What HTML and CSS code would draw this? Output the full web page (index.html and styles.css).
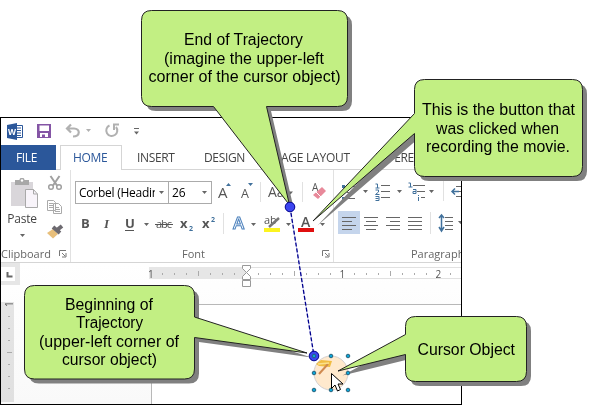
FILE: index.html
```html
<!DOCTYPE html>
<html lang="en">
<head>
<meta charset="utf-8">
<title>Cursor trajectory</title>
<link rel="stylesheet" href="styles.css">
</head>
<body>
<main class="figure">
  <section class="window">
    <header class="quickbar">
      <svg class="quick-icons" viewBox="0 0 150 27" width="150" height="27">
        <path d="M15 7.500h6.500v12H15z" fill="#fff" stroke="#2b579a"/>
        <path d="M16 10h4M16 12.500h4M16 15h4M16 17.500h4" stroke="#2b579a"/>
        <path d="M6 7l10-2v17l-10-2z" fill="#2b579a"/>
        <text x="7" y="16.500" class="word-mark" textLength="8" lengthAdjust="spacingAndGlyphs">W</text>
        <path d="M36 6h14v14H36z" fill="#8455a5"/>
        <path d="M38.500 7.500h9.500v5.500h-9.500zM39 15h8v4h-8z" fill="#fff"/>
        <path d="M41 16.500h3v2.500h-3z" fill="#8455a5"/>
        <path d="M70 6.500l-4 4 4 4M66.500 10.500h6.500c6.500 0 6.500 8-1 8" fill="none" stroke="#b1b1b1" stroke-width="2.200"/>
        <path d="M85 11h5l-2.500 3z" fill="#b1b1b1"/>
        <path d="M108.500 7.500a5.500 5.500 0 1 0 6.500 1.500M118 6.500h-5v5.500" fill="none" stroke="#b1b1b1" stroke-width="2"/>
        <path d="M133 10.500h5" stroke="#666"/><path d="M133 13.500h5l-2.500 3z" fill="#666"/>
      </svg>
    </header>
    <nav class="tabs">
      <span class="tab file">FILE</span>
      <span class="tab home">HOME</span>
      <span class="tab insert">INSERT</span>
      <span class="tab design">DESIGN</span>
      <span class="tab layout">PAGE LAYOUT</span>
      <span class="tab refs">REFERENCES</span>
    </nav>
    <div class="ribbon">
      <section class="group clipboard">
        <div class="clip-body">
          <div class="paste">
            <svg viewBox="0 0 30 32" width="30" height="32">
              <path d="M1 4h22v24H1z" fill="#d9d6da"/>
              <path d="M5 2h4.500c0-3 5-3 5 0H19v5H5z" fill="#a8a8a8"/><circle cx="12" cy="2.500" r="1.200" fill="#fff"/>
              <path d="M15.500 11.500h8l4 4.500v13.500h-12z" fill="#f8f4fa" stroke="#a9a9a9"/>
              <path d="M23.500 11.500v4.500h4" fill="none" stroke="#a9a9a9"/>
            </svg>
            <span class="paste-label">Paste</span>
            <svg class="caret" viewBox="0 0 5 3" width="5" height="3"><path d="M0 0h5L2.500 3z"/></svg>
          </div>
          <svg class="clip-icons" viewBox="0 0 20 68" width="20" height="68">
            <g fill="none" stroke="#a0a0a0"><path d="M4.500 2l6.500 9.500M13.500 2L7 11.500" stroke-width="2"/><circle cx="5" cy="13" r="2.300" stroke-width="1.500"/><circle cx="13" cy="13" r="2.300" stroke-width="1.500"/></g>
            <g fill="#fff" stroke="#aaa"><path d="M1.500 26.500h6l2 2v8h-8zM7.500 29.500h5l3 3v7h-8z"/><path d="M3 29.500h4M3 31.500h4M3 33.500h4M9 33.500h4M9 35.500h5M9 37.500h5"/></g>
            <path d="M7 55l5 5-5 4.500L1 59z" fill="#e8bf7b"/><path d="M7 53l7 6M11 56l5-4" stroke="#6d6a70" stroke-width="4"/>
          </svg>
        </div>
        <footer class="group-name"><span>Clipboard</span><svg class="launcher" viewBox="0 0 8 8" width="8" height="8"><path d="M.5 6V.5H7M3 3l3 3M7 3v4H3"/></svg></footer>
      </section>
      <section class="group font">
        <div class="pickers">
          <div class="picker family"><span>Corbel (Headin</span><svg class="caret" viewBox="0 0 5 3" width="5" height="3"><path d="M0 0h5L2.500 3z"/></svg></div>
          <div class="picker size"><span>26</span><svg class="caret" viewBox="0 0 5 3" width="5" height="3"><path d="M0 0h5L2.500 3z"/></svg></div>
          <svg viewBox="212 0 121 24" width="121" height="24">
            <g class="glyph"><text x="218" y="17.500" font-size="15">A</text><text x="241" y="17.500" font-size="12.500">A</text><text x="268" y="17" font-size="14">Aa</text><text x="312" y="11" font-size="10">A</text></g>
            <path d="M226 6l2.500-3L231 6zM248 3h5l-2.500 3z" fill="#41719c"/>
            <path d="M288 11.500h5l-2.500 3z" fill="#666"/><path d="M260.500 2v20M302.500 2v20" stroke="#e1e1e1"/>
            <path d="M313 15l9-8 4 4-8 8z" fill="#e8899a"/><path d="M316 12l5 5" stroke="#fff"/>
          </svg>
        </div>
        <svg class="font-tools" viewBox="71 0 262 26" width="262" height="26">
          <g class="glyph strong"><text x="81" y="17">B</text><text x="104" y="17" class="italic">I</text><text x="125" y="17">U</text></g>
          <path d="M125 19.500h9" stroke="#555"/>
          <g class="glyph"><text x="156" y="17" font-size="11" textLength="16">abc</text></g><path d="M155 13.500h18" stroke="#555"/>
          <g class="glyph strong"><text x="180" y="17">x</text><text x="202" y="17">x</text></g>
          <g class="tiny-blue"><text x="189" y="20">2</text><text x="211" y="11">2</text></g>
          <path d="M223.500 2v21" stroke="#e1e1e1"/>
          <text x="233" y="18" class="effect">A</text>
          <g class="glyph"><text x="264" y="13" font-size="11">ab</text></g><path d="M279 7l-10 9" stroke="#777" stroke-width="2.500"/><path d="M264 17h16v4h-16z" fill="#fcf420"/>
          <text x="301" y="16" class="colour-a">A</text><path d="M298 17h16v4h-16z" fill="#e00f0f"/>
          <path d="M144 12h5l-2.500 3zM251 12h5l-2.500 3zM286 12h5l-2.500 3zM320 12h5l-2.500 3z" fill="#666"/>
        </svg>
        <footer class="group-name"><span>Font</span><svg class="launcher" viewBox="0 0 8 8" width="8" height="8"><path d="M.5 6V.5H7M3 3l3 3M7 3v4H3"/></svg></footer>
      </section>
      <section class="group paragraph">
        <svg class="lists" viewBox="334 0 127 24" width="127" height="24">
          <path d="M347 7.500h8M347 13.500h8M347 19.500h8M381 6.500h9M381 12.500h9M381 18.500h9M413 6.500h12M417 12.500h8M421 18.500h4M456 7.500h5M458 12.500h3M456 17.500h5" stroke="#666"/>
          <path d="M342 6h3v3h-3zM342 12h3v3h-3zM342 18h3v3h-3z" fill="#41719c"/>
          <path d="M375.500 5h2v4m-2 0h4M375.500 11h3v2l-3 2.500h4M375.500 17.500h3.500v4h-3.500m0-2h3" fill="none" stroke="#41719c"/>
          <path d="M408.500 4h2v4m-2 0h4M413 10.500h3v4h-3v-2h3M418.500 18v4m0-6v1" fill="none" stroke="#41719c"/>
          <path d="M363 11h5l-2.500 3zM397 11h5l-2.500 3zM429 11h5l-2.500 3z" fill="#666"/>
          <path d="M443.500 1v21" stroke="#e1e1e1"/><path d="M459 12.500h-6M455 9.500l-3 3 3 3" fill="none" stroke="#41719c" stroke-width="1.500"/>
        </svg>
        <svg class="aligns" viewBox="334 0 127 26" width="127" height="26">
          <path d="M338 1h22v23h-22z" fill="#c5d5ec"/>
          <path d="M342 7.500h14M342 11.500h10M342 15.500h14M342 19.500h10M364 7.500h14M366 11.500h10M364 15.500h14M366 19.500h10M386 7.500h14M390 11.500h10M386 15.500h14M390 19.500h10M408 7.500h14M408 11.500h14M408 15.500h14M408 19.500h14M445 7.500h8M445 11.500h8M445 15.500h8M445 19.500h8" stroke="#666"/>
          <path d="M430.500 2v22" stroke="#e1e1e1"/><path d="M441.500 5v16M439 8l2.500-3 2.500 3M439 17l2.500 4 2.500-4" fill="none" stroke="#41719c" stroke-width="1.500"/><path d="M458 11h5l-2.500 3z" fill="#666"/>
        </svg>
        <footer class="group-name"><span>Paragraph</span></footer>
      </section>
    </div>
    <div class="document">
      <svg class="canvas" viewBox="1 263 460 141" width="460" height="141">
        <path d="M151 304h310v100H151z" fill="#fff"/><path d="M151.500 404v-99.500H461" fill="none" stroke="#b8b8b8"/>
        <path d="M1 263h19v22H1z" fill="#e6e6e6"/><path d="M1 267h14v14H1z" fill="#fff"/><path d="M7.500 272v4.500h5" fill="none" stroke="#666" stroke-width="2"/>
        <path d="M149 267h97v12h-97z" fill="#e6e6e6"/><path d="M246 267h215v12H246z" fill="#fff"/><path d="M246 267.500h215M246 278.500h215" stroke="#e1e1e1"/>
        <path d="M162.500 273v2m12-2v2m12-2v2m12-4v5m12-3v2m12-2v2m12-2v2m24-2v2m12-2v2m12-2v2m12-4v5m12-3v2m12-2v2m12-2v2m24-2v2m12-2v2m12-2v2m12-4v5m12-3v2m12-2v2m12-2v2m24-2v2" stroke="#aaa"/>
        <g class="numbers"><text x="148" y="277.500">1</text><text x="339.500" y="277.500">1</text><text x="435.500" y="277.500">2</text><text transform="translate(13 307) rotate(-90)">1</text></g>
        <path d="M242.500 265.500h8v3l-4 4 4 4v3h-8v-3l4-4-4-4zM242.500 280.500h8v6h-8z" fill="#fff" stroke="#999"/>
        <path class="side-ruler" d="M1 302h13v100H1z"/>
        <path d="M8 316.500h2m-2 12h2m-2 12h2m-3 12h5m-4 12h2m-2 12h2m-2 12h2" stroke="#aaa"/>
      </svg>
    </div>
  </section>

  <svg class="annotations" viewBox="0 0 598 405" width="598" height="405">
    <circle cx="331" cy="373" r="17" fill="#ffe9cd" stroke="#d4d0d0"/>
    <path d="M316 364l5-4 11 1-2 6-11-1z" fill="#f1bd43"/><path d="M328 364l-9 10" stroke="#d08a50" stroke-width="2"/><path d="M318 364l11-1" stroke="#fbe08d" stroke-width="1.500"/>
    <defs>
      <path id="end-shape" d="M151.500 10.500h186q10 0 10 10v76q0 10-10 10H266.500L289.500 205 213.500 106.500h-62q-10 0-10-10v-76q0-10 10-10z"/>
      <path id="button-shape" d="M424.500 79.500h148q10 0 10 10v77q0 10-10 10h-148q-10 0-10-10V133.500L313 221 414.500 113.500v-24q0-10 10-10z"/>
      <path id="start-shape" d="M34.500 285.500h150q10 0 10 10v21.500L307 353 194.500 337.500v31.500q0 10-10 10h-150q-10 0-10-10v-73.500q0-10 10-10z"/>
      <path id="cursor-shape" d="M415.500 316.500h101q10 0 10 10v45q0 10-10 10h-101q-10 0-10-10V354.500L338 371 405.500 334.500v-8q0-10 10-10z"/>
    </defs>
    <g class="shadow"><use href="#end-shape"/><use href="#button-shape"/><use href="#start-shape"/><use href="#cursor-shape"/></g>
    <g class="bubble"><use href="#end-shape"/><use href="#button-shape"/><use href="#start-shape"/><use href="#cursor-shape"/></g>
    <path d="M290 207l24 149" stroke="#c9c9f3"/><path d="M290 207l24 149" stroke="#00008c" stroke-width="1.300" stroke-dasharray="4 2"/>
    <circle class="node" cx="290" cy="207" r="4.800"/><circle class="node" cx="314" cy="356" r="4.800"/>
    <g class="handles"><circle cx="314" cy="356" r="1.800"/><circle cx="331" cy="356" r="1.800"/><circle cx="348" cy="356" r="1.800"/><circle cx="314" cy="373" r="1.800"/><circle cx="348" cy="373" r="1.800"/><circle cx="314" cy="390" r="1.800"/><circle cx="331" cy="390" r="1.800"/><circle cx="348" cy="390" r="1.800"/></g>
    <path d="M331.500 373.500v15l3.500-3.500 2.500 6 3-1.500-2.500-5.500h5z" fill="#fff" stroke="#000"/>
    <g class="caption">
      <text x="184" y="45" textLength="119" lengthAdjust="spacingAndGlyphs">End of Trajectory</text>
      <text x="164" y="63.500" textLength="160" lengthAdjust="spacingAndGlyphs">(imagine the upper-left</text>
      <text x="148.500" y="82" textLength="192" lengthAdjust="spacingAndGlyphs">corner of the cursor object)</text>
      <text x="422" y="115" textLength="153" lengthAdjust="spacingAndGlyphs">This is the button that</text>
      <text x="436" y="133.500" textLength="123" lengthAdjust="spacingAndGlyphs">was clicked when</text>
      <text x="426" y="152" textLength="144" lengthAdjust="spacingAndGlyphs">recording the movie.</text>
      <text x="65" y="310" textLength="88" lengthAdjust="spacingAndGlyphs">Beginning of</text>
      <text x="76" y="328" textLength="67" lengthAdjust="spacingAndGlyphs">Trajectory</text>
      <text x="39" y="346.500" textLength="140" lengthAdjust="spacingAndGlyphs">(upper-left corner of</text>
      <text x="62" y="365" textLength="95" lengthAdjust="spacingAndGlyphs">cursor object)</text>
      <text x="417.500" y="355" textLength="97.500" lengthAdjust="spacingAndGlyphs">Cursor Object</text>
    </g>
  </svg>
</main>
</body>
</html>
```

FILE: styles.css
```css
* { box-sizing: border-box; }
body { margin: 0; background: #fff; font-family: "Open Sans", "Noto Sans", sans-serif; color: #444; }
svg { display: block; flex: none; }
.figure { position: relative; width: 598px; height: 405px; padding-top: 117px; overflow: hidden; }
.window { width: 462px; height: 288px; border: 1px solid #000; overflow: hidden; display: flex; flex-direction: column; background: #fff; }
.quickbar { height: 27px; flex: none; }
.tabs { height: 25px; flex: none; display: flex; font-size: 12px; line-height: 25px; white-space: nowrap; border-bottom: 1px solid #d5d5d5; }
.tab { flex: none; height: 25px; letter-spacing: -.35px; }
.file { width: 55px; background: #2b579a; color: #fff; padding-left: 15px; }
.home { width: 62px; margin-left: 4px; padding-left: 12px; border: 1px solid #d5d5d5; border-bottom: 0; background: #fff; color: #2b579a; line-height: 23px; }
.insert { margin-left: 15px; width: 67px; }
.design { width: 70px; }
.layout { width: 101px; letter-spacing: -.25px; }
.ribbon { height: 93px; flex: none; display: flex; border-bottom: 1px solid #d5d5d5; }
.group { display: flex; flex-direction: column; height: 92px; position: relative; flex: none; }
.group-name { display: flex; align-items: center; height: 16px; margin-top: auto; font-size: 11px; color: #666; line-height: 16px; }
.clipboard { width: 70px; border-right: 1px solid #e1e1e1; }
.clip-body { display: flex; height: 72px; padding-top: 4px; }
.paste { width: 42px; padding: 4px 0 0 0; display: flex; flex-direction: column; align-items: center; }
.paste svg:first-child { margin-left: 6px; }
.paste-label { font-size: 12px; line-height: 16px; margin-top: 1px; letter-spacing: -.2px; }
.caret { fill: #666; }
.paste .caret { margin-top: 7px; }
.clip-icons { margin-left: 3px; }
.clipboard .launcher { margin-left: 8px; }
.launcher { fill: none; stroke: #777; }
.font { width: 263px; border-right: 1px solid #e1e1e1; padding-top: 10px; }
.pickers { display: flex; height: 24px; padding-left: 4px; align-items: center; }
.picker { height: 23px; border: 1px solid #ababab; display: flex; align-items: center; font-size: 12px; color: #000; overflow: hidden; white-space: nowrap; padding-left: 3px; }
.family { width: 94px; }
.family span { width: 76px; overflow: hidden; letter-spacing: -.25px; }
.family .caret { margin-left: 4px; }
.size { width: 43px; border-left: 0; }
.size .caret { margin-left: 16px; }
.font-tools { margin-top: 7px; }
.font .group-name { padding-left: 111px; }
.font .launcher { margin-left: auto; margin-right: 3px; }
.paragraph { width: 127px; padding-top: 10px; }
.lists { margin-top: -1px; }
.aligns { margin-top: 7px; }
.paragraph .group-name { padding-left: 77px; }
.document { flex: 1; background: linear-gradient(#fff, #f9f9f9); }
.side-ruler { fill: #e6e6e6; fill-opacity: .999; mix-blend-mode: multiply; }
.annotations { position: absolute; left: 0; top: 0; fill: none; }
.shadow { fill: #808080; transform: translate(4.500px, 4.500px); }
.bubble { fill: #c2ef83; stroke: #222; }
.node { fill: #3c45f0; stroke: #00008c; }
.handles { fill: #0aa5d8; stroke: #28637c; }
.caption { fill: #000; font-family: "Liberation Sans", Arial, sans-serif; font-size: 16px; }
.word-mark { fill: #fff; font-size: 9px; font-weight: 700; }
.glyph { fill: #555; }
.strong { font-size: 13px; font-weight: 700; }
.italic { font-style: italic; font-family: "Liberation Serif", serif; }
.tiny-blue { fill: #41719c; font-size: 7px; font-weight: 700; }
.effect { fill: #fff; stroke: #4d82bd; font-size: 17px; font-weight: 600; }
.colour-a { fill: #555; font-size: 14px; font-weight: 600; }
.numbers { fill: #555; font-size: 10px; }
```
